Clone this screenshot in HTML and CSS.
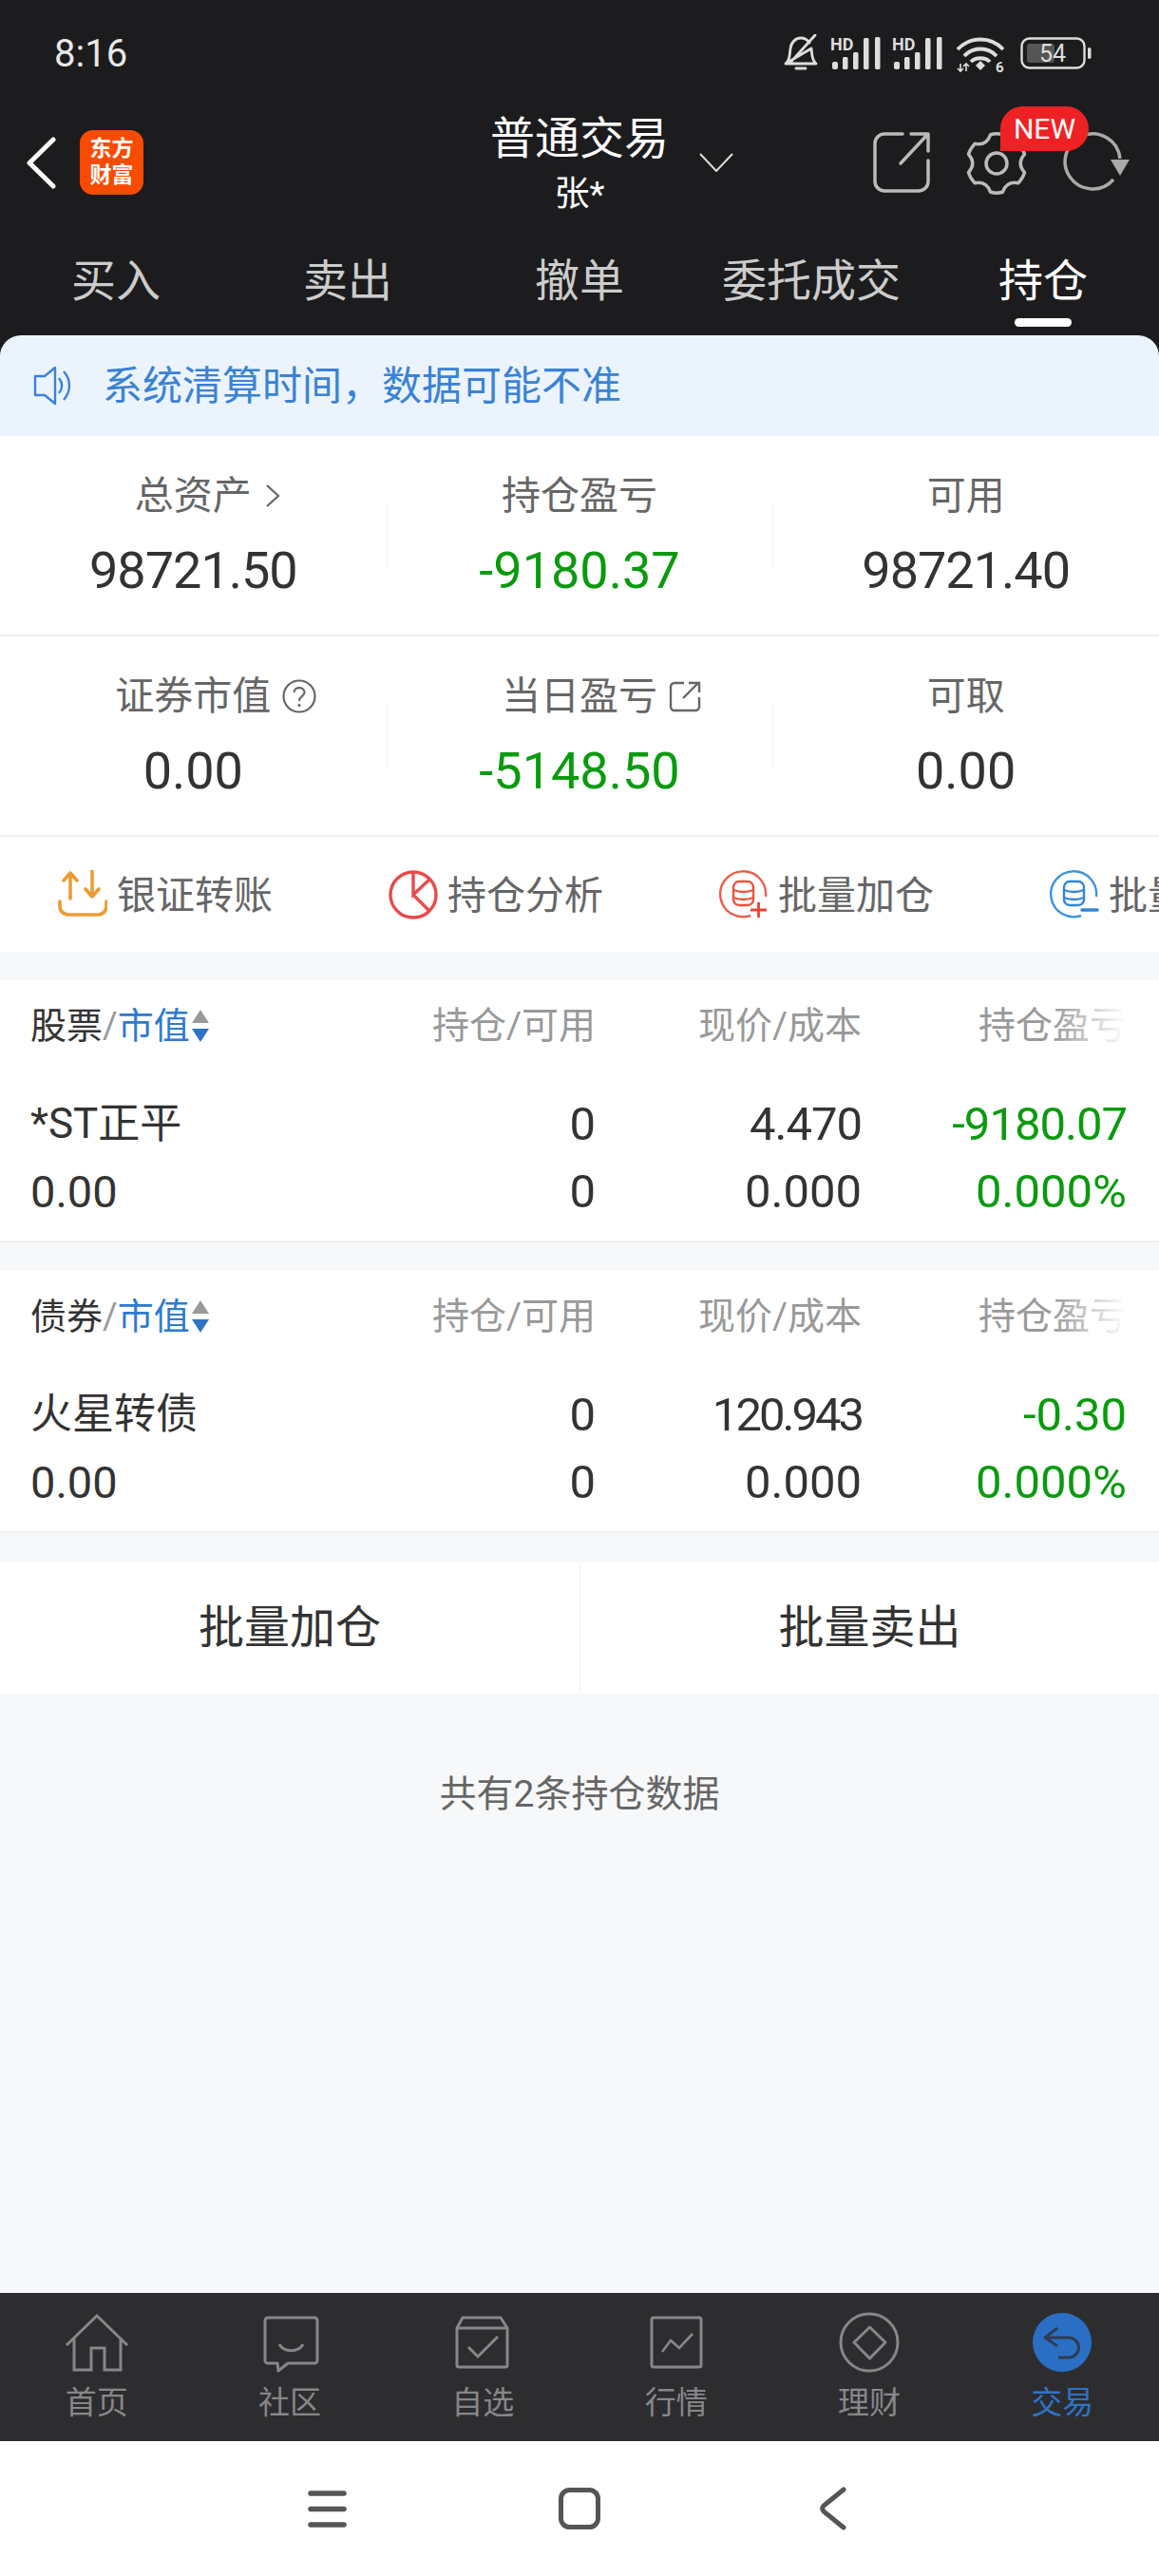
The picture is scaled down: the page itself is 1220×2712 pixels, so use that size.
FILE: index.html
```html
<!DOCTYPE html>
<html lang="zh-CN">

<head>
    <meta charset="UTF-8">
    <meta name="viewport" content="width=device-width, initial-scale=1.0">
    <title>普通交易 持仓</title>
    <link rel="stylesheet" href="styles.css">
</head>

<body>
    <div class="page">
        <header class="top">
            <div class="status">
                <span class="clock">8:16</span>
                <div class="status-icons">
                    <svg class="st-bell" width="38" height="40" viewBox="0 0 38 40">
                        <path d="M3 31 C8 27 7 21 8 15 C9 8 14 4 19 4 C23 4 26 6 28 9 M30 15 C31 21 30 27 35 31 H3 Z M14 36 H24 M34 1 L7 31" fill="none" stroke="#ddd" stroke-width="2.8" stroke-linecap="round" stroke-linejoin="round" />
                    </svg>
                    <svg class="st-signal" width="53" height="40" viewBox="0 0 53 40">
                        <text x="0" y="18" class="hd">HD</text>
                        <rect x="2" y="30" width="6" height="8" rx="2" fill="#ddd" />
                        <rect x="13" y="25" width="5.500" height="13" rx="1.500" fill="#ddd" />
                        <rect x="24" y="20" width="5.500" height="18" rx="1.500" fill="#ddd" />
                        <rect x="35" y="5" width="5.500" height="33" rx="1.500" fill="#ddd" />
                        <rect x="47" y="4" width="5.500" height="34" rx="1.500" fill="#ddd" />
                    </svg>
                    <svg class="st-signal" width="53" height="40" viewBox="0 0 53 40">
                        <text x="0" y="18" class="hd">HD</text>
                        <rect x="2" y="30" width="6" height="8" rx="2" fill="#ddd" />
                        <rect x="13" y="25" width="5.500" height="13" rx="1.500" fill="#ddd" />
                        <rect x="24" y="20" width="5.500" height="18" rx="1.500" fill="#ddd" />
                        <rect x="35" y="5" width="5.500" height="33" rx="1.500" fill="#ddd" />
                        <rect x="47" y="4" width="5.500" height="34" rx="1.500" fill="#ddd" />
                    </svg>
                    <svg class="st-wifi" width="52" height="46" viewBox="0 0 52 46">
                        <path d="M2 15 C15 1 37 1 50 15 M9 22 C18 12 34 12 43 22 M16 28 C21 23 31 23 36 28" fill="none" stroke="#ddd" stroke-width="3.800" />
                        <path d="M21 32 L26 27 L31 32 L26 37 Z" fill="#ddd" />
                        <path d="M5 30 V38 M2 35 L5 38 L8 35 M11 38 V30 M8 33 L11 30 L14 33" fill="none" stroke="#ddd" stroke-width="1.600" />
                        <text x="42" y="39" class="wifi-six">6</text>
                    </svg>
                    <svg class="st-batt" width="75" height="34" viewBox="0 0 75 34">
                        <rect x="1.500" y="1.500" width="66" height="31" rx="8" fill="none" stroke="#ddd" stroke-width="2.400" />
                        <rect x="7" y="7" width="29" height="20" rx="3" fill="#555" />
                        <rect x="71" y="11" width="3.500" height="12" rx="1.700" fill="#ddd" />
                        <text x="34" y="25.500" class="batt-num">54</text>
                    </svg>
                </div>
            </div>

            <div class="toolbar">
                <div class="tool-left">
                    <svg class="back" width="33" height="55" viewBox="0 0 33 55">
                        <path d="M29 3 L4 27.500 L29 52" fill="none" stroke="#fff" stroke-width="5" stroke-linecap="round" stroke-linejoin="round" />
                    </svg>
                    <div class="logo">东方<br>财富</div>
                </div>
                <div class="tool-title">
                    <div class="title">普通交易</div>
                    <div class="subtitle">张*</div>
                </div>
                <div class="tool-right">
                    <svg class="drop" width="36" height="20" viewBox="0 0 36 20">
                        <path d="M1 1 L18 19 L35 1" fill="none" stroke="#ddd" stroke-width="2" />
                    </svg>
                    <div class="tool-icons">
                        <svg width="60" height="64" viewBox="0 0 60 64">
                            <path d="M31 2 H12 A10 10 0 0 0 2 12 V52 A10 10 0 0 0 12 62 H48 A10 10 0 0 0 58 52 V30 M29 33 L57 3 M40 2 H58 V20" fill="none" stroke="#bbb" stroke-width="3.500" stroke-linecap="round" stroke-linejoin="round" />
                        </svg>
                        <div class="gear-wrap">
                            <svg width="66" height="66" viewBox="0 0 66 66">
                                <path d="M26.600 2.700 Q33 1 39.400 2.700 Q43.500 14.800 56 12.300 Q61 18 62.500 23.400 Q54 33 62.500 42.600 Q61 48 56 53.700 Q43.500 51.200 39.400 63.300 Q33 65 26.600 63.300 Q22.500 51.200 10 53.700 Q5 48 3.500 42.600 Q12 33 3.500 23.400 Q5 18 10 12.300 Q22.500 14.800 26.600 2.700 Z" fill="none" stroke="#bbb" stroke-width="3.500" stroke-linejoin="round" />
                                <circle cx="33" cy="33" r="11" fill="none" stroke="#bbb" stroke-width="3.500" />
                            </svg>
                            <span class="badge">NEW</span>
                        </div>
                        <svg width="70" height="64" viewBox="0 0 70 64">
                            <path d="M60 28 A29 29 0 1 0 53 50" fill="none" stroke="#aaa" stroke-width="3.500" />
                            <path d="M50 29 H70 L60 46 Z" fill="#aaa" />
                        </svg>
                    </div>
                </div>
            </div>

            <nav class="tabs">
                <a>买入</a>
                <a>卖出</a>
                <a>撤单</a>
                <a>委托成交</a>
                <a class="active">持仓</a>
            </nav>
        </header>

        <main class="content">
            <div class="notice">
                <svg width="40" height="42" viewBox="0 0 40 42">
                    <path d="M2 11 H12 L23 2 V40 L12 31 H2 Z" fill="none" stroke="#3a82d6" stroke-width="2.400" stroke-linejoin="round" />
                    <path d="M27 13 C31 18 31 24 27 29 M32 6 C40 15 40 27 32 36" fill="none" stroke="#3a82d6" stroke-width="2.400" />
                </svg>
                <span>系统清算时间，数据可能不准</span>
            </div>

            <section class="summary">
                <div class="stat-row">
                    <div class="stat">
                        <div class="stat-label">总资产
                            <span class="hang">
                                <svg class="hang-arrow" width="16" height="26" viewBox="0 0 16 26">
                                    <path d="M2 2 L14 13 L2 24" fill="none" stroke="#666" stroke-width="2.200" />
                                </svg>
                            </span>
                        </div>
                        <div class="stat-value tight">98721.50</div>
                    </div>
                    <div class="stat">
                        <div class="stat-label">持仓盈亏</div>
                        <div class="stat-value green">-9180.37</div>
                    </div>
                    <div class="stat">
                        <div class="stat-label">可用</div>
                        <div class="stat-value tight">98721.40</div>
                    </div>
                </div>
                <div class="stat-row">
                    <div class="stat">
                        <div class="stat-label">证券市值
                            <span class="hang">
                                <svg width="36" height="36" viewBox="0 0 36 36">
                                    <circle cx="18" cy="18" r="16.500" fill="none" stroke="#666" stroke-width="2.200" />
                                    <path d="M12.500 14 C12.500 7.500 23.500 7.500 23.500 14 C23.500 18 18 18 18 23" fill="none" stroke="#666" stroke-width="2.200" />
                                    <circle cx="18" cy="27.500" r="1.600" fill="#666" />
                                </svg>
                            </span>
                        </div>
                        <div class="stat-value">0.00</div>
                    </div>
                    <div class="stat">
                        <div class="stat-label">当日盈亏
                            <span class="hang">
                                <svg width="34" height="33" viewBox="0 0 34 33">
                                    <path d="M16 2 H6 A4 4 0 0 0 2 6 V27 A4 4 0 0 0 6 31 H28 A4 4 0 0 0 32 27 V17 M15 18 L31 2 M21 2 H32 V12" fill="none" stroke="#666" stroke-width="2.400" />
                                </svg>
                            </span>
                        </div>
                        <div class="stat-value green">-5148.50</div>
                    </div>
                    <div class="stat">
                        <div class="stat-label">可取</div>
                        <div class="stat-value">0.00</div>
                    </div>
                </div>
            </section>

            <div class="actions">
                <div class="action">
                    <svg width="52" height="52" viewBox="0 0 52 52">
                        <path d="M2 33 V38 A9 9 0 0 0 11 47 H42 A9 9 0 0 0 51 38 V33 M13 30 V3 M6 11 L13 3 L20 11 M36 1 V28 M29 20 L36 28 L43 20" fill="none" stroke="#ec9c33" stroke-width="3.600" stroke-linecap="round" stroke-linejoin="round" />
                    </svg>
                    <span>银证转账</span>
                </div>
                <div class="action">
                    <svg width="52" height="52" viewBox="0 0 52 52">
                        <circle cx="26" cy="26" r="24" fill="none" stroke="#e94b4b" stroke-width="3.400" />
                        <path d="M26 2 V26 L44 9 M26 26 L43 43" fill="none" stroke="#e94b4b" stroke-width="3.400" />
                    </svg>
                    <span>持仓分析</span>
                </div>
                <div class="action">
                    <svg width="52" height="52" viewBox="0 0 52 52">
                        <path d="M33 48 A24 24 0 1 1 49 28" fill="none" stroke="#e8604c" stroke-width="2.400" />
                        <rect x="15" y="12" width="21" height="25" rx="6" fill="none" stroke="#e8543f" stroke-width="2.400" />
                        <path d="M15 21 Q25.500 25 36 21 M15 29 Q25.500 33 36 29" fill="none" stroke="#e8543f" stroke-width="2.400" />
                        <path d="M33 42 H50 M41.500 34 V50" fill="none" stroke="#e8432f" stroke-width="2.800" />
                    </svg>
                    <span>批量加仓</span>
                </div>
                <div class="action">
                    <svg width="52" height="52" viewBox="0 0 52 52">
                        <path d="M33 48 A24 24 0 1 1 49 28" fill="none" stroke="#3b93dd" stroke-width="2.400" />
                        <rect x="15" y="12" width="21" height="25" rx="6" fill="none" stroke="#2f86d8" stroke-width="2.400" />
                        <path d="M15 21 Q25.500 25 36 21 M15 29 Q25.500 33 36 29" fill="none" stroke="#2f86d8" stroke-width="2.400" />
                        <path d="M34 42 H50" fill="none" stroke="#2f86d8" stroke-width="3.600" stroke-linecap="round" />
                    </svg>
                    <span>批量卖出</span>
                </div>
            </div>

            <section class="holding">
                <div class="hold-head">
                    <div class="head-name">股票<i>/</i><b>市值</b>
                        <svg width="18" height="34" viewBox="0 0 18 34">
                            <path d="M0 14 L9 0 L18 14 Z" fill="#999" />
                            <path d="M0 20 H18 L9 34 Z" fill="#2f73c4" />
                        </svg>
                    </div>
                    <div>持仓/可用</div>
                    <div>现价/成本</div>
                    <div>持仓盈亏</div>
                </div>
                <div class="hold-row">
                    <div class="name">*ST正平</div>
                    <div>0</div>
                    <div class="tight">4.470</div>
                    <div class="green tight">-9180.07</div>
                    <div class="name num">0.00</div>
                    <div>0</div>
                    <div>0.000</div>
                    <div class="green">0.000%</div>
                </div>
            </section>

            <section class="holding">
                <div class="hold-head">
                    <div class="head-name">债券<i>/</i><b>市值</b>
                        <svg width="18" height="34" viewBox="0 0 18 34">
                            <path d="M0 14 L9 0 L18 14 Z" fill="#999" />
                            <path d="M0 20 H18 L9 34 Z" fill="#2f73c4" />
                        </svg>
                    </div>
                    <div>持仓/可用</div>
                    <div>现价/成本</div>
                    <div>持仓盈亏</div>
                </div>
                <div class="hold-row">
                    <div class="name">火星转债</div>
                    <div>0</div>
                    <div class="tighter">120.943</div>
                    <div class="green">-0.30</div>
                    <div class="name num">0.00</div>
                    <div>0</div>
                    <div>0.000</div>
                    <div class="green">0.000%</div>
                </div>
            </section>

            <div class="batch">
                <div>批量加仓</div>
                <div>批量卖出</div>
            </div>

            <p class="count">共有2条持仓数据</p>
        </main>

        <nav class="bottom-nav">
            <a>
                <svg width="70" height="66" viewBox="0 0 70 66">
                    <path d="M3 36 L35 5 L67 36 M11 28 V62 H29 V39 H43 V62 H60 V28" fill="none" stroke="#87878a" stroke-width="3" />
                </svg>
                <span>首页</span>
            </a>
            <a>
                <svg width="70" height="66" viewBox="0 0 70 66">
                    <path d="M12 7 H61 A3 3 0 0 1 64 10 V52 A3 3 0 0 1 61 55 H33 L23 63 L22 55 H12 A3 3 0 0 1 9 52 V10 A3 3 0 0 1 12 7 Z" fill="none" stroke="#87878a" stroke-width="3" stroke-linejoin="round" />
                    <path d="M24 35 C29 44 44 44 49 35" fill="none" stroke="#87878a" stroke-width="3" />
                </svg>
                <span>社区</span>
            </a>
            <a>
                <svg width="70" height="66" viewBox="0 0 70 66">
                    <path d="M14 7 H54 L61 18 V57 A2 2 0 0 1 59 59 H10 A2 2 0 0 1 8 57 V18 Z M8 18 H61 M20 38 L30 48 L51 27" fill="none" stroke="#87878a" stroke-width="3" stroke-linejoin="round" />
                </svg>
                <span>自选</span>
            </a>
            <a>
                <svg width="70" height="66" viewBox="0 0 70 66">
                    <rect x="9" y="7" width="52" height="52" rx="2" fill="none" stroke="#87878a" stroke-width="3" />
                    <path d="M20 43 L29 31 L38 39 L52 24" fill="none" stroke="#87878a" stroke-width="2.600" />
                </svg>
                <span>行情</span>
            </a>
            <a>
                <svg width="70" height="66" viewBox="0 0 70 66">
                    <circle cx="35" cy="33" r="30" fill="none" stroke="#87878a" stroke-width="3" />
                    <path d="M35.500 17 L52 33 L35.500 50 L19 33 Z" fill="none" stroke="#87878a" stroke-width="3" stroke-linejoin="round" />
                </svg>
                <span>理财</span>
            </a>
            <a class="active">
                <svg width="70" height="66" viewBox="0 0 70 66">
                    <circle cx="35" cy="33" r="31" fill="#2a6fc4" />
                    <path d="M30 18 L17 28 L30 37 M17 28 H42 A10.500 10.500 0 0 1 42 49 H31" fill="none" stroke="#2f3c52" stroke-width="3" stroke-linejoin="round" />
                </svg>
                <span>交易</span>
            </a>
        </nav>

        <div class="sys-nav">
            <svg width="41" height="39" viewBox="0 0 41 39">
                <path d="M3 3 H38 M3 19.500 H38 M3 36 H38" stroke="#555" stroke-width="5.500" stroke-linecap="round" />
            </svg>
            <svg width="44" height="44" viewBox="0 0 44 44">
                <rect x="2.500" y="2.500" width="39" height="39" rx="9" fill="none" stroke="#555" stroke-width="5" />
            </svg>
            <svg class="sys-back" width="28" height="46" viewBox="0 0 28 46">
                <path d="M25 3 L4 20 Q1.500 23 4 26 L25 43" fill="none" stroke="#555" stroke-width="5" stroke-linecap="round" />
            </svg>
        </div>
    </div>
</body>

</html>
```

FILE: styles.css
```css
body {
    margin: 0;
    font-family: Roboto, "Noto Sans CJK SC", sans-serif;
    background-color: #f7f8fa;
    color: #333;
}

.page {
    width: 1220px;
    height: 2712px;
    display: flex;
    flex-direction: column;
    overflow: hidden;
}

.green {
    color: #0a9a0e;
}

/* Roboto digits are all one width, these values run narrower in the app */
.tight {
    letter-spacing: -1px;
}

.tighter {
    letter-spacing: -3px;
}

/* dark top area */
.top {
    background: #1c1c1e;
    height: 353px;
    flex: none;
}

.status {
    height: 112px;
    display: flex;
    justify-content: space-between;
    padding: 36px 71px 0 57px;
    box-sizing: border-box;
}

.clock {
    font-size: 40px;
    line-height: 42px;
    color: #e8e8e8;
}

.status-icons {
    display: flex;
    align-items: flex-start;
}

.st-signal {
    margin: -1px 0 0 12px;
}

.st-wifi {
    margin: 1px 0 0 14px;
}

.st-batt {
    margin: 3px 0 0 16px;
}

.hd {
    font-size: 18px;
    font-weight: 700;
    fill: #ddd;
}

.wifi-six {
    font-size: 15px;
    font-weight: 700;
    fill: #ddd;
}

.batt-num {
    font-size: 25px;
    fill: #ddd;
    text-anchor: middle;
}

.toolbar {
    height: 150px;
    display: grid;
    grid-template-columns: 1fr 192px 1fr;
    box-sizing: border-box;
    padding-top: 6px;
}

.tool-left {
    display: flex;
    align-items: center;
    gap: 24px;
    padding-left: 27px;
    margin-top: 19px;
    height: 68px;
}

.logo {
    width: 67px;
    height: 68px;
    border-radius: 14px;
    background: #fb4b00;
    color: #fff;
    font-size: 23px;
    font-weight: 700;
    line-height: 28px;
    text-align: center;
    padding-top: 6px;
    box-sizing: border-box;
}

.tool-title {
    text-align: center;
    color: #fff;
}

.title {
    font-size: 47px;
    line-height: 56px;
    white-space: nowrap;
}

.subtitle {
    font-size: 37px;
    line-height: 46px;
    margin-top: 8px;
}

.tool-right {
    display: flex;
    align-items: flex-start;
    justify-content: space-between;
    padding: 21px 31px 0 30px;
}

.drop {
    margin-top: 22px;
}

.tool-icons {
    display: flex;
    align-items: flex-start;
    gap: 37px;
}

.gear-wrap {
    position: relative;
    height: 66px;
}

.badge {
    position: absolute;
    left: 37px;
    top: -27px;
    width: 93px;
    height: 47px;
    background: #ee2224;
    color: #fff;
    font-size: 30px;
    line-height: 47px;
    text-align: center;
    border-radius: 24px 24px 24px 0;
}

.tabs {
    display: grid;
    grid-template-columns: repeat(5, 1fr);
    height: 91px;
}

.tabs a {
    position: relative;
    text-align: center;
    font-size: 47px;
    line-height: 68px;
    color: #ccc;
}

.tabs a.active {
    color: #fff;
}

.tabs a.active::after {
    content: "";
    position: absolute;
    left: 50%;
    bottom: 9px;
    width: 60px;
    height: 9px;
    margin-left: -30px;
    border-radius: 5px;
    background: #fff;
}

/* main area */
.content {
    flex: 1;
    position: relative;
    background: #1c1c1e;
}

.content::after {
    content: "";
    position: absolute;
    left: 0;
    right: 0;
    top: 30px;
    bottom: 0;
    background: #f7f8fa;
    z-index: 0;
}

.content > * {
    position: relative;
    z-index: 1;
}

.notice {
    height: 106px;
    background: #ebf4fd;
    border-radius: 22px 22px 0 0;
    display: flex;
    align-items: center;
    gap: 33px;
    padding-left: 35px;
    color: #3a82d6;
    font-size: 42px;
}

.notice span {
    margin-top: -7px;
}

.summary {
    background: #fff;
}

.stat-row {
    display: grid;
    grid-template-columns: repeat(3, 1fr);
    height: 211px;
    border-bottom: 2px solid #f0f0f2;
    box-sizing: border-box;
}

.stat {
    position: relative;
    text-align: center;
    padding-top: 38px;
}

.stat + .stat::before {
    content: "";
    position: absolute;
    left: 0;
    top: 72px;
    width: 1px;
    height: 66px;
    background: #eeeeee;
}

.stat-label {
    display: flex;
    justify-content: center;
    align-items: center;
    font-size: 41px;
    line-height: 50px;
    color: #666;
}

/* icon sits beside the label, the label itself stays centred */
.hang {
    display: flex;
    flex: none;
    width: 0;
}

.hang svg {
    flex: none;
    margin-left: 12px;
}

.hang .hang-arrow {
    margin-left: 14px;
}

.stat-value {
    font-size: 54px;
    line-height: 66px;
    margin-top: 21px;
    color: #333;
}

.stat-value.green {
    color: #0a9a0e;
}

.actions {
    display: flex;
    height: 121px;
    overflow: hidden;
    background: #fff;
}

.action {
    flex: 0 0 348px;
    display: flex;
    align-items: center;
    justify-content: center;
    gap: 10px;
    font-size: 41px;
    color: #666;
    white-space: nowrap;
}

.action span {
    margin-top: -6px;
}

.holding {
    margin-top: 30px;
    background: #fff;
    height: 276px;
    border-bottom: 2px solid #f0f0f2;
    box-sizing: border-box;
    padding: 0 34px 0 32px;
}

.hold-head,
.hold-row {
    display: grid;
    grid-template-columns: 315px 280px 280px 279px;
    text-align: right;
}

.hold-head {
    position: relative;
    height: 96px;
    line-height: 96px;
    font-size: 39px;
    color: #999;
}

/* last header cell fades out towards the edge */
.hold-head::after {
    content: "";
    position: absolute;
    right: 0;
    top: 20px;
    width: 78px;
    height: 56px;
    background: linear-gradient(to right, rgba(255, 255, 255, 0), #fff);
}

.head-name {
    display: flex;
    align-items: center;
    text-align: left;
    color: #333;
    font-size: 38px;
}

.head-name i {
    font-style: normal;
    color: #999;
}

.head-name b {
    font-weight: 400;
    color: #2f7ad0;
}

.head-name svg {
    margin-left: 2px;
}

.hold-row {
    padding-top: 20px;
    font-size: 49px;
    line-height: 71px;
}

.hold-row .name {
    text-align: left;
    font-size: 44px;
}

.hold-row .name.num {
    font-size: 47px;
}

.batch {
    margin-top: 31px;
    display: grid;
    grid-template-columns: 1fr 1fr;
    height: 138px;
    background: #fff;
    font-size: 48px;
    line-height: 138px;
    text-align: center;
}

.batch div + div {
    border-left: 1px solid #f2f2f2;
}

.count {
    margin: 0;
    padding-top: 82px;
    font-size: 39px;
    line-height: 48px;
    color: #666;
    text-align: center;
}

/* bottom bars */
.bottom-nav {
    flex: none;
    height: 156px;
    background: #2d2d2f;
    display: grid;
    grid-template-columns: repeat(6, 1fr);
}

.bottom-nav a {
    display: flex;
    flex-direction: column;
    align-items: center;
    padding-top: 19px;
    font-size: 33px;
    line-height: 44px;
    color: #87878a;
}

.bottom-nav span {
    margin-top: 9px;
}

.bottom-nav a.active {
    color: #2f73c4;
}

.sys-nav {
    flex: none;
    height: 142px;
    background: #fff;
    display: grid;
    grid-template-columns: 41px 44px 28px;
    justify-content: start;
    align-items: center;
    column-gap: 223px;
    padding-left: 324px;
}

.sys-back {
    margin-left: 8px;
}
```
